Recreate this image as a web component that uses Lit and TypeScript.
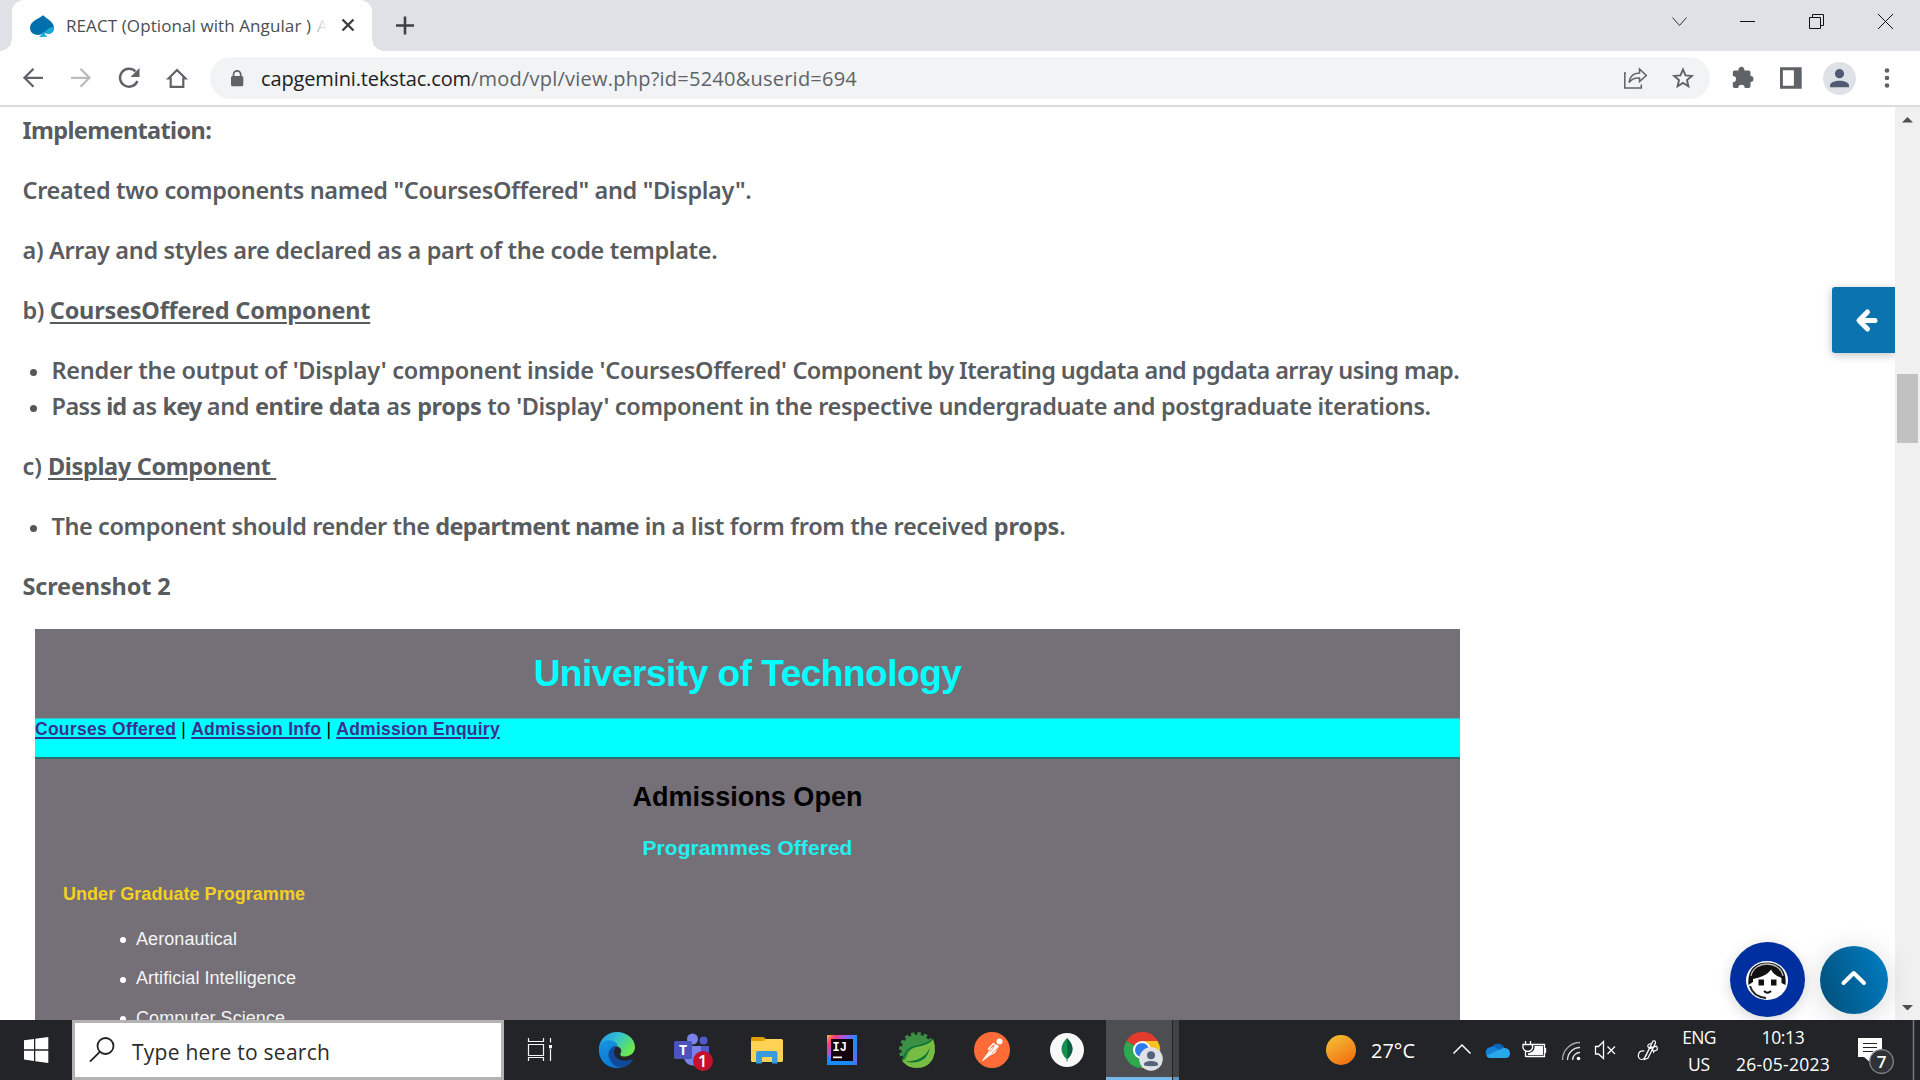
import { LitElement, html, svg, css } from "lit";
import { customElement, property } from "lit/decorators.js";

/** Text run whose letter spacing is derived from a desired advance width. */
@customElement("fit-text")
class FitText extends LitElement {
  @property({ type: Number }) width = 0;
  static styles = css`
    :host { display: inline-block; white-space: pre; }
  `;
  async firstUpdated() {
    await document.fonts.ready;
    const natural = this.getBoundingClientRect().width;
    const count = (this.textContent ?? "").length;
    if (this.width && count) {
      this.style.letterSpacing = `${(this.width - natural) / (count - 0.5)}px`;
    }
  }
  render() {
    return html`<slot></slot>`;
  }
}

/** Icon cell: an SVG window of w×h that shows the canvas region starting at x,y. */
const cell = (x: number, y: number, w: number, h: number, body: unknown) =>
  html`<svg class="cell" width=${w} height=${h} viewBox="${x} ${y} ${w} ${h}">${body}</svg>`;

@customElement("browser-chrome")
class BrowserChrome extends LitElement {
  static styles = css`
    :host { display: block; font-family: "Open Sans", "Noto Sans", sans-serif; }
    .cell { display: block; flex: none; }
    .tabs { display: flex; height: 51px; background: #dee1e6; padding-left: 12px; }
    .tab { position: relative; display: flex; align-items: center; width: 360px; height: 51px; background: #fff; border-radius: 12px 12px 0 0; box-sizing: border-box; padding-left: 18px; }
    .tab::before, .tab::after { content: ""; position: absolute; bottom: 0; width: 12px; height: 12px; }
    .tab::before { left: -12px; background: radial-gradient(circle at 0 0, transparent 11.5px, #fff 12px); }
    .tab::after { right: -12px; background: radial-gradient(circle at 100% 0, transparent 11.5px, #fff 12px); }
    .title { margin-left: 12px; width: 264px; font-size: 17px; line-height: 51px; color: #4a4e52; white-space: pre; overflow: hidden; }
    .fade { margin-left: 6px; background: linear-gradient(90deg, #bbb, #fff); background-clip: text; -webkit-background-clip: text; color: transparent; }
    .grow { flex: 1; }
    .bar { display: flex; height: 54px; background: #fff; padding: 0 9px; border-bottom: 2px solid #dadbdd; }
    .omni { display: flex; flex: 1; margin: 6px 9px; height: 42px; border-radius: 21px; background: #f1f3f4; font-size: 20px; line-height: 43px; color: #5f6368; }
    .host { color: #202124; }
  `;
  render() {
    return html`
      <div class="tabs">
        <div class="tab">
          ${cell(30, 13, 24, 24, svg`
            <path d="M43 14.300C47 18 54 21 54 27C54 31.500 50 33.500 46.500 32.500L44 31.500C40 36 30 34 30 27C30 20 39 18 43 14.300Z" fill="#0070ad"/>
            <path d="M54 26.500C54 31 50 33 46.500 32L44.500 31.500Q45 34.500 47.500 35.700L39 36Q41.500 34.500 42.500 31.500C47 31 48 25 54 26.500Z" fill="#17abda"/>`)}
          <div class="title"><fit-text width="245">REACT (Optional with Angular )</fit-text><span class="fade">A</span></div>
          ${cell(330, 0, 36, 51, svg`<path d="M342.500 19.500L353.500 30.500M353.500 19.500L342.500 30.500" stroke="#3c4043" stroke-width="2.400" fill="none"/>`)}
        </div>
        ${cell(372, 0, 60, 51, svg`<path d="M396 25.500H414M405 16.500V34.500" stroke="#3c4043" stroke-width="2.600"/>`)}
        <div class="grow"></div>
        ${cell(1645, 0, 275, 51, svg`
          <g stroke="#111" stroke-width="1" fill="none">
            <path d="M1672.500 17.500L1679.500 25.500L1686.500 17.500" stroke="#333"/>
            <path d="M1740 21.500H1755"/>
            <path d="M1809.500 17.500H1820.500V28.500H1809.500ZM1812.500 17.500V14.500H1823.500V25.500H1820.500"/>
            <path d="M1878 14L1893 29M1893 14L1878 29"/>
          </g>`)}
      </div>
      <div class="bar">
        ${cell(9, 51, 48, 54, svg`<path d="M43 77.800H25M33.500 68.800L24.500 77.800L33.500 86.800" stroke="#5f6368" stroke-width="2.300" fill="none"/>`)}
        ${cell(57, 51, 48, 54, svg`<path d="M71 77.800H89M80.500 68.800L89.500 77.800L80.500 86.800" stroke="#babcbe" stroke-width="2.300" fill="none"/>`)}
        ${cell(105, 51, 48, 54, svg`<path d="M135.500 71.500A9 9 0 1 0 137.400 81" stroke="#5f6368" stroke-width="2.400" fill="none"/><path d="M139.500 68V77H130.500Z" fill="#5f6368"/>`)}
        ${cell(153, 51, 48, 54, svg`<path d="M168.500 78.500L177 70L185.500 78.500H183.300V86.800H170.700V78.500Z" stroke="#5f6368" stroke-width="2.200" fill="none"/>`)}
        <div class="omni">
          ${cell(210, 57, 51, 42, svg`<rect x="231" y="76" width="12.300" height="10.300" rx="1.500" fill="#5f6368"/><path d="M233.500 77V74.500A3.600 3.600 0 0 1 240.700 74.500V77" stroke="#5f6368" stroke-width="1.700" fill="none"/>`)}
          <fit-text class="host" width="210">capgemini.tekstac.com</fit-text><fit-text width="386">/mod/vpl/view.php?id=5240&userid=694</fit-text>
          <div class="grow"></div>
          ${cell(1612, 57, 48, 42, svg`<path d="M1626 73H1624.800V88H1641.300V84.500M1629 82.500C1630 76 1634 73 1639.500 73V69L1646.300 75.500L1639.500 81.500V78C1634.500 77.500 1631.500 79 1629 82.500Z" stroke="#5f6368" stroke-width="1.500" fill="none"/>`)}
          ${cell(1660, 57, 50, 42, svg`<path d="M1683 69.500L1685.500 75.400L1691.800 75.900L1687 80L1688.400 86.200L1683 82.900L1677.600 86.200L1679 80L1674.200 75.900L1680.500 75.400Z" stroke="#5f6368" stroke-width="1.900" fill="none"/>`)}
        </div>
        ${cell(1719, 51, 48, 54, svg`<path d="M1734.500 70.500H1738.500A3 3 0 1 1 1744.300 70.500H1748.500Q1750.500 70.500 1750.500 72.500V76A3 3 0 1 1 1750.500 82V86Q1750.500 88 1748.500 88H1744.700A3 3 0 1 0 1738.300 88H1734.500Q1732.800 88 1732.800 86V82.300A3 3 0 1 0 1732.800 75.900V72.500Q1732.800 70.500 1734.500 70.500Z" fill="#5f6368"/>`)}
        ${cell(1767, 51, 48, 54, svg`<path d="M1780 67.300H1801.700V88.800H1780ZM1782.900 70.300V85.800H1793.900V70.300Z" fill="#5f6368" fill-rule="evenodd"/>`)}
        ${cell(1815, 51, 48, 54, svg`<circle cx="1839.500" cy="78.500" r="16.500" fill="#dee1e6"/><circle cx="1839.500" cy="73.700" r="4.600" fill="#4f5b72"/><path d="M1830 87.300V85.500C1830 79 1849 79 1849 85.500V87.300Z" fill="#4f5b72"/>`)}
        ${cell(1863, 51, 48, 54, svg`<g fill="#5f6368"><circle cx="1887" cy="70.500" r="2.300"/><circle cx="1887" cy="78" r="2.300"/><circle cx="1887" cy="85.500" r="2.300"/></g>`)}
      </div>`;
  }
}

@customElement("lesson-page")
class LessonPage extends LitElement {
  static styles = css`
    :host { display: flex; position: relative; height: 913px; overflow: hidden; background: #fff; }
    .cell { display: block; }
    .doc { flex: 1; padding: 5px 0 0 22.5px; font: 560 23.5px/36px "Noto Sans", "Open Sans", sans-serif; color: #595c5f; }
    p { margin: 0 0 24px; height: 36px; white-space: pre; display: flex; }
    ul { list-style: none; margin: 0 0 24px; padding: 0 0 0 7px; }
    .doc > ul > li { display: flex; align-items: center; height: 36px; }
    .doc > ul > li::before { content: ""; width: 7px; height: 7px; border-radius: 50%; background: #55585a; margin: 4px 15px 0 0; }
    b { font-weight: 700; }
    .u { font-weight: 700; text-decoration: underline; text-decoration-thickness: 2px; text-underline-offset: 3px; }
    .shot { width: 1425px; height: 391px; overflow: hidden; margin: 25px 0 0 12.5px; background: #757077; font-family: "Liberation Sans", Arial, sans-serif; font-weight: 700; color: #000; text-align: center; }
    .uni { font-size: 37px; line-height: 90px; height: 89px; color: #0ff; }
    .nav { display: flex; height: 41px; background: #0ff; border-top: 1px solid #35bcbe; border-bottom: 2px solid #2d6d70; box-sizing: border-box; font-size: 17.500px; line-height: 21px; white-space: pre; }
    .nav fit-text { color: #3a3090; text-decoration: underline; text-decoration-thickness: 1.500px; text-underline-offset: 2px; text-decoration-skip-ink: auto; }
    .nav span { width: 15px; font-weight: 400; }
    .open { font-size: 27px; line-height: 76px; height: 76px; }
    .prog { font-size: 21px; line-height: 25px; color: #23eff0; }
    .ug { font-size: 18px; line-height: 50px; padding: 9px 0 0 28px; color: #f5d020; text-align: left; }
    .shot ul { padding: 0 0 0 85px; font-weight: 400; font-size: 18px; color: #f4f4f4; text-align: left; }
    .shot li { display: flex; align-items: center; height: 39.5px; }
    .shot li::before { content: ""; width: 6px; height: 6px; border-radius: 50%; background: #fff; margin: 3px 10px 0 0; }
    .toggle, .chat, .top { position: absolute; display: grid; }
    .toggle { left: 1832px; top: 180px; width: 63px; height: 66px; background: #0b74b0; border-radius: 3px 0 0 3px; box-shadow: 0 2px 10px rgba(0, 0, 0, 0.25); clip-path: inset(-20px 0 -20px -20px); }
    .chat { left: 1730px; top: 835px; width: 75px; height: 75px; border-radius: 50%; background: #0030a0; box-shadow: 0 3px 14px rgba(0, 0, 0, 0.16); }
    .top { left: 1820px; top: 839px; width: 68px; height: 68px; border-radius: 50%; background: linear-gradient(70deg, #02507a 5%, #0079bd 88%); box-shadow: 0 4px 28px rgba(0, 0, 0, 0.16); }
    .scroll { position: relative; display: flex; flex-direction: column; width: 25px; background: #f0f0f0; }
    .thumb { width: 21px; height: 69px; margin: 243px 0 0 2px; background: #c1c1c1; }
    .track { flex: 1; }
  `;
  render() {
    return html`
      <div class="doc">
        <p><fit-text width="189"><b>Implementation:</b></fit-text></p>
        <p><fit-text width="729">Created two components named "CoursesOffered" and "Display".</fit-text></p>
        <p><fit-text width="695">a) Array and styles are declared as a part of the code template.</fit-text></p>
        <p><fit-text width="27.500">b) </fit-text><fit-text class="u" width="320.500">CoursesOffered Component</fit-text></p>
        <ul>
          <li><fit-text width="741">Render the output of 'Display' component inside 'CoursesOffered' </fit-text><fit-text width="667">Component by Iterating ugdata and pgdata array using map.</fit-text></li>
          <li><fit-text width="55">Pass </fit-text><b><fit-text width="20.500">id</fit-text></b><fit-text width="36.500"> as </fit-text><b><fit-text width="39">key</fit-text></b><fit-text width="54"> and </fit-text><b><fit-text width="125.500">entire data</fit-text></b><fit-text width="37"> as </fit-text><b><fit-text width="64.500">props</fit-text></b><fit-text width="949.500"> to 'Display' component in the respective undergraduate and postgraduate iterations.</fit-text></li>
        </ul>
        <p><fit-text width="25.500">c) </fit-text><fit-text class="u" width="228.500">Display Component&nbsp;</fit-text></p>
        <ul>
          <li><fit-text width="384">The component should render the </fit-text><b><fit-text width="204">department name</fit-text></b><fit-text width="355"> in a list form from the received </fit-text><b><fit-text width="65.500">props</fit-text></b><fit-text width="5">.</fit-text></li>
        </ul>
        <p><fit-text width="148"><b>Screenshot 2</b></fit-text></p>
        <div class="shot">
          <div class="uni"><fit-text width="428">University of Technology</fit-text></div>
          <div class="nav"><fit-text width="141">Courses Offered</fit-text><span> | </span><fit-text width="130">Admission Info</fit-text><span> | </span><fit-text width="163.500">Admission Enquiry</fit-text></div>
          <div class="open"><fit-text width="230">Admissions Open</fit-text></div>
          <div class="prog"><fit-text width="210">Programmes Offered</fit-text></div>
          <div class="ug"><fit-text width="242">Under Graduate Programme</fit-text></div>
          <ul>
            <li><fit-text width="101">Aeronautical</fit-text></li>
            <li><fit-text width="160">Artificial Intelligence</fit-text></li>
            <li><fit-text width="149">Computer Science</fit-text></li>
          </ul>
        </div>
      </div>
      <div class="scroll">
        ${cell(1895, 107, 25, 24, svg`<path d="M1902 122.500L1907.500 117L1913 122.500Z" fill="#505050"/>`)}
        <div class="thumb"></div>
        <div class="track"></div>
        ${cell(1895, 996, 25, 24, svg`<path d="M1902 1005L1907.500 1010.500L1913 1005Z" fill="#505050"/>`)}
      </div>
      <div class="toggle">${cell(1832, 287, 63, 66, svg`<path d="M1867.500 312L1859 320.500L1867.500 329M1860 320.500H1875" stroke="#fff" stroke-width="5" stroke-linecap="round" stroke-linejoin="round" fill="none"/>`)}</div>
      <div class="chat">${cell(1730, 942, 75, 75, svg`
        <ellipse cx="1767" cy="980.500" rx="21" ry="19.500" fill="#fff"/>
        <path d="M1753 982V979C1762 977 1767 975 1771 969.500C1773 974 1777 976 1781.500 978V983L1785.500 985C1787 969 1778 962.500 1767 962.500C1756 962.500 1747 969 1748.500 985Z" fill="#111"/>
        <path d="M1751 976C1754 960 1780 960 1783 976" stroke="#bbb" stroke-width="1.300" fill="none"/>
        <rect x="1758.500" y="979.500" width="5.500" height="6" fill="#111"/><rect x="1771" y="979.500" width="5.500" height="6" fill="#111"/>
        <path d="M1764 991Q1767.500 994.500 1771 991" stroke="#111" stroke-width="2" fill="none"/>
        <path d="M1750 986Q1753 996.500 1766 998" stroke="#222" stroke-width="2" fill="none"/>`)}</div>
      <div class="top">${cell(1820, 946, 68, 68, svg`<path d="M1843.500 983L1853.700 973L1864 983" stroke="#fff" stroke-width="4" stroke-linecap="round" stroke-linejoin="round" fill="none"/>`)}</div>`;
  }
}

@customElement("task-bar")
class TaskBar extends LitElement {
  static styles = css`
    :host { display: flex; height: 60px; background: #222428; color: #fff; font-family: "Open Sans", "Noto Sans", sans-serif; }
    .cell { display: block; flex: none; }
    .search { display: flex; box-sizing: border-box; width: 432px; height: 60px; border: 3px solid #b3b3b3; background: #fff; color: #2b2b2b; font-size: 21px; line-height: 58px; }
    .active { display: flex; box-sizing: border-box; width: 66px; height: 60px; margin-left: 2px; background: #4c4e51; border-bottom: 3px solid #76b9ed; }
    .stack { width: 5px; height: 57px; margin-left: 1px; padding-right: 1px; background: #414346; border-bottom: 3px solid #5d93bf; }
    .grow { flex: 1; }
    .temp { width: 66px; font-size: 20px; line-height: 62px; }
    .two { display: flex; flex-direction: column; align-items: center; font-size: 17.500px; line-height: 27px; padding-top: 4px; height: 56px; }
    .lang { width: 50px; }
    .clock { width: 118px; }
    text { font-family: "Open Sans", sans-serif; }
  `;
  render() {
    return html`
      ${cell(0, 1020, 72, 60, svg`<path d="M24 1040.300L34 1039V1049.300H24ZM35.300 1038.800L48.300 1037V1049.300H35.300ZM24 1050.700H34V1061L24 1059.500ZM35.300 1050.700H48.300V1063L35.300 1061.200Z" fill="#fff"/>`)}
      <div class="search">
        ${cell(75, 1023, 57, 54, svg`<circle cx="105.500" cy="1046" r="8" stroke="#222" stroke-width="1.800" fill="none"/><path d="M99.800 1051.800L90 1061.700" stroke="#222" stroke-width="1.800"/>`)}
        <fit-text width="198">Type here to search</fit-text>
      </div>
      ${cell(504, 1020, 75, 60, svg`<path d="M528.500 1038V1041.500H543.500V1038M528.500 1044.500H543.500V1055.500H528.500ZM528.500 1061V1057.500H543.500V1061M550.500 1038V1042.500M550.500 1049V1061" stroke="#f5f5f5" stroke-width="1.200" fill="none"/><rect x="549" y="1045" width="3" height="3.300" fill="#fff"/>`)}
      ${cell(579, 1020, 75, 60, svg`
        <defs>
          <linearGradient id="ea" x1="0" y1="0" x2="1" y2="0.500"><stop offset="0.100" stop-color="#2399e0"/><stop offset="0.500" stop-color="#33c3d0"/><stop offset="1" stop-color="#6be84e"/></linearGradient>
          <linearGradient id="eb" x1="0" y1="0" x2="0.500" y2="1"><stop offset="0" stop-color="#1795e0"/><stop offset="1" stop-color="#0a77d4"/></linearGradient>
        </defs>
        <path d="M599 1048C600 1038 608 1032 617 1032C627 1032 635 1039 635 1047C635 1053 630 1056.500 625 1056.500C620 1056.500 619.500 1054.500 621 1052.500C622 1050 620 1046 615 1046Z" fill="url(#ea)"/>
        <path d="M599 1048C600 1038.500 614 1038 618 1045C612 1045 609.500 1051 612 1056.500C615 1062.500 625 1064 632.500 1059.500C628 1066.500 622 1068 617 1068C606 1068 598 1059 599 1048Z" fill="url(#eb)"/>
        <path d="M617 1045.500C610 1047 606 1053 610 1060C613 1065.500 618 1068 621 1067.500C627 1066.500 630.500 1063.500 632.800 1060C633 1059 632.500 1059 631.500 1059.500C622 1063 614 1058.500 614 1052C614 1048.500 617 1047 617 1045.500Z" fill="#114a9b"/>`)}
      ${cell(654, 1020, 75, 60, svg`
        <circle cx="703.500" cy="1040.500" r="4" fill="#5059c9"/><path d="M697 1046H709V1056Q707 1062 700 1060Z" fill="#5059c9"/>
        <circle cx="692.500" cy="1039" r="5.500" fill="#7b83eb"/><path d="M684 1046H701V1058C701 1068 686 1068 684 1058Z" fill="#7b83eb"/>
        <rect x="674" y="1041" width="18" height="18" rx="1.500" fill="#4b53bc"/>
        <text x="683" y="1055" font-size="14" font-weight="700" fill="#fff" text-anchor="middle">T</text>
        <circle cx="703" cy="1061" r="10" fill="#c4112f"/><text x="702.500" y="1067" font-size="17" font-weight="600" fill="#fff" text-anchor="middle">1</text>`)}
      ${cell(729, 1020, 75, 60, svg`
        <path d="M751 1038.500Q751 1037 752.500 1037H763.500L766 1039V1045H751Z" fill="#e0a000"/>
        <path d="M751 1041H763L766 1039H781.500Q783 1039 783 1040.500V1060.500Q783 1062 781.500 1062H752.500Q751 1062 751 1060.500Z" fill="#ffd255"/>
        <path d="M756 1063.500V1053Q756 1051 758 1051H775.500Q777.500 1051 777.500 1053V1063.500H772V1057H762V1063.500Z" fill="#3a9ade"/>`)}
      ${cell(804, 1020, 75, 60, svg`
        <defs><linearGradient id="ij" x1="0" y1="0" x2="1" y2="0.800"><stop offset="0" stop-color="#fdb83a"/><stop offset="0.180" stop-color="#fb3a78"/><stop offset="0.400" stop-color="#9a5cf0"/><stop offset="0.650" stop-color="#1c8cf5"/><stop offset="1" stop-color="#5b6ef8"/></linearGradient></defs>
        <rect x="827" y="1035" width="30" height="30" fill="url(#ij)"/><path d="M827 1052L831 1061H853V1065H827Z" fill="#1a8bf5"/><rect x="831" y="1039" width="22" height="22" fill="#12030f"/>
        <text x="832.500" y="1050.500" font-size="12" font-weight="700" fill="#fff" style="font-family: 'Liberation Mono', monospace">IJ</text><rect x="833" y="1056.500" width="9" height="1.700" fill="#fff"/>`)}
      ${cell(879, 1020, 75, 60, svg`
        <circle cx="917" cy="1050" r="15.500" fill="#3b9044"/><circle cx="917" cy="1050" r="16" fill="none" stroke="#3b9044" stroke-width="4" stroke-dasharray="3.300 2.983"/>
        <path d="M933 1039C938 1052 933 1068 917 1068C910 1068 905 1065 901.500 1060C908 1063 905 1052 914 1047.500C921 1044 929 1046 933 1039Z" fill="#77bc43"/>
        <path d="M904.500 1061.500C916 1062 927 1057 930 1047C928 1060 918 1065 904.500 1061.500Z" fill="#0b7339"/><path d="M902 1060C906 1056 904 1049 915 1046.500C924 1044.500 930 1043 932.500 1038.500" fill="none" stroke="#0b7339" stroke-width="1.500"/>`)}
      ${cell(954, 1020, 75, 60, svg`
        <circle cx="992" cy="1050" r="18" fill="#ff6c37"/><circle cx="999.500" cy="1041.500" r="3" fill="#fff"/>
        <path d="M997 1044.500L990.500 1048.500L987.500 1053L982 1060.500L983 1061L990 1055.500L995 1053L999 1046.500Z" fill="#fff"/><path d="M988 1049.500L993.500 1043.500L996 1046" stroke="#fff" stroke-width="1.400" fill="none"/><path d="M999.500 1047L992 1053M994 1047L990 1052" stroke="#ff6c37" stroke-width="0.700"/>`)}
      ${cell(1029, 1020, 75, 60, svg`<circle cx="1067" cy="1050" r="17" fill="#f8f8f8"/><path d="M1067 1038C1074 1045 1074.500 1052 1067.500 1059V1061.500H1066.500V1059C1059.500 1052 1060 1045 1067 1038Z" fill="#12924f"/><path d="M1067 1038C1074 1045 1074.500 1052 1067.500 1059Z" fill="#08603e"/>`)}
      <div class="active">
        ${cell(1106, 1020, 66, 57, svg`
          <path d="M1142 1050L1126.400 1041A18 18 0 0 1 1157.600 1041Z" fill="#e33b2e"/>
          <path d="M1142 1050L1126.400 1041A18 18 0 0 0 1142 1068Z" fill="#2da94f"/>
          <path d="M1142 1050L1142 1041H1157.600A18 18 0 0 1 1142 1068Z" fill="#fcc31e"/>
          <path d="M1142 1032A18 18 0 0 1 1157.600 1041H1142Z" fill="#e33b2e"/>
          <circle cx="1142" cy="1050" r="9" fill="#fff"/><circle cx="1142" cy="1050" r="7" fill="#2f7bee"/>
          <circle cx="1151" cy="1059" r="11.800" fill="#dee1e6"/><circle cx="1151" cy="1055.300" r="4" fill="#56617a"/><path d="M1144 1065.500V1064C1144 1060 1158 1060 1158 1064V1065.500Q1151 1067 1144 1065.500Z" fill="#56617a"/>`)}
      </div>
      <div class="stack"></div>
      <div class="grow"></div>
      ${cell(1320, 1020, 51, 60, svg`<defs><linearGradient id="sun" x1="0.100" y1="0" x2="0.700" y2="1"><stop offset="0.100" stop-color="#f4b932"/><stop offset="1" stop-color="#f2700f"/></linearGradient></defs><circle cx="1341" cy="1050" r="15" fill="url(#sun)"/>`)}
      <div class="temp"><fit-text width="44">27°C</fit-text></div>
      ${cell(1437, 1020, 41, 60, svg`<path d="M1453.500 1053.500L1462 1045L1470.500 1053.500" stroke="#fff" stroke-width="1.500" fill="none"/>`)}
      ${cell(1478, 1020, 38, 60, svg`<path d="M1491 1048A7.500 7.500 0 0 1 1504 1047L1508 1053L1492 1055Z" fill="#0a64b8"/><path d="M1491 1058A5.500 5.500 0 0 1 1489 1047.500Q1494 1045.500 1498 1049L1504 1053L1500 1058Z" fill="#1480d8"/><path d="M1502 1048.500C1507 1046.500 1510 1050 1510 1053.500C1510 1056.500 1508 1058 1505.500 1058H1490C1488 1058 1487 1057 1486.500 1055.500Z" fill="#28a8ea"/>`)}
      ${cell(1516, 1020, 38, 60, svg`<path d="M1530 1044.500H1544.500V1056.500H1526M1545.500 1048V1053M1525.500 1041V1044M1530.500 1041V1044M1523 1044.500H1532.500V1048Q1531 1051.500 1528 1051.500Q1524.500 1051.500 1523 1048ZM1525.500 1051V1057" stroke="#fff" stroke-width="1.300" fill="none"/><path d="M1534.500 1046H1543V1055H1528V1053.500Q1534 1052 1534.500 1048Z" fill="#fff"/>`)}
      ${cell(1554, 1020, 36, 60, svg`<g fill="none" stroke-width="1.400"><path d="M1562.500 1060A17.500 17.500 0 0 1 1580 1042.500" stroke="#aaa"/><path d="M1567.500 1060A12.500 12.500 0 0 1 1580 1047.500M1572.500 1060A7.500 7.500 0 0 1 1580 1052.500" stroke="#ddd"/></g><circle cx="1578.500" cy="1058.500" r="1.800" fill="#fff"/>`)}
      ${cell(1590, 1020, 38, 60, svg`<path d="M1595.500 1046.500H1598.500L1603.500 1041.500V1058.500L1598.500 1054H1595.500ZM1607.500 1046.500L1615 1054M1615 1046.500L1607.500 1054" stroke="#fff" stroke-width="1.300" fill="none"/>`)}
      ${cell(1628, 1020, 46, 60, svg`<path d="M1645 1057L1653 1041Q1655.500 1040 1655.500 1043L1648 1058L1644.500 1059.500ZM1644.500 1051C1637 1050 1636.500 1059.500 1642 1059.500C1647 1059.500 1648 1046 1652 1047L1653.500 1052C1655 1048.500 1658.500 1052.500 1657 1047C1656 1044 1653 1050 1649 1048C1646.500 1046 1648 1044 1651 1043.500" stroke="#fff" stroke-width="1.200" fill="none"/>`)}
      <div class="two lang"><fit-text width="34">ENG</fit-text><fit-text width="22">US</fit-text></div>
      <div class="two clock"><fit-text width="43">10:13</fit-text><fit-text width="94">26-05-2023</fit-text></div>
      ${cell(1842, 1020, 78, 60, svg`
        <path d="M1858 1038H1882V1057H1871V1063L1864 1057H1858Z" fill="#fff"/><path d="M1863 1043.500H1877M1863 1047.500H1877M1863 1051.500H1873" stroke="#222" stroke-width="1.200"/>
        <circle cx="1881.500" cy="1061.500" r="11.800" fill="#303236" stroke="#8a8c8f" stroke-width="1.200"/><text x="1881.500" y="1067.500" font-size="17" font-weight="600" fill="#fff" text-anchor="middle">7</text>
        <path d="M1913.500 1020V1080" stroke="#77797c" stroke-width="1.500"/>`)}`;
  }
}

@customElement("app-root")
class AppRoot extends LitElement {
  static styles = css`
    :host { display: block; width: 1920px; height: 1080px; overflow: hidden; background: #fff; }
  `;
  render() {
    return html`<browser-chrome></browser-chrome><lesson-page></lesson-page><task-bar></task-bar>`;
  }
}
